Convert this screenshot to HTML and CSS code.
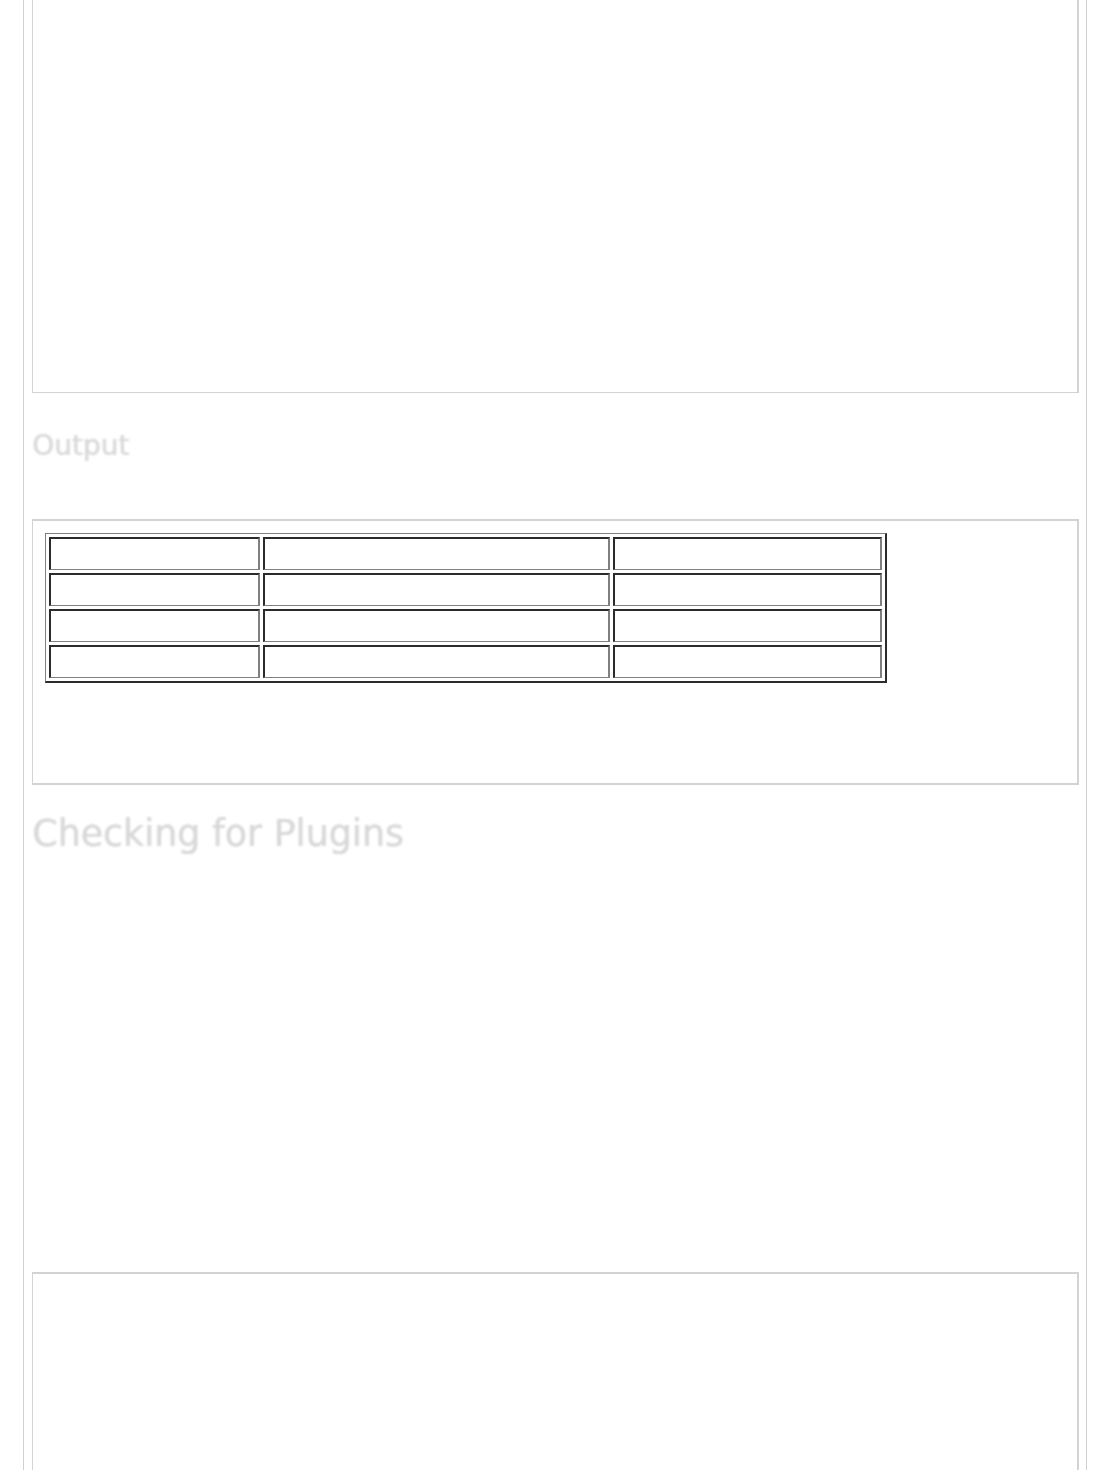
FILE: index.html
```html
<!DOCTYPE html>
<html lang="en">
<head>
<meta charset="utf-8">
<title>Checking for Plugins</title>
<link rel="stylesheet" href="styles.css">
</head>
<body>
<div class="page">
  <div class="box box-top"></div>
  <h2 class="heading heading-sub">Output</h2>
  <div class="box box-output">
    <table class="result">
      <tr><td class="c1">&nbsp;</td><td class="c2">&nbsp;</td><td class="c3">&nbsp;</td></tr>
      <tr><td class="c1">&nbsp;</td><td class="c2">&nbsp;</td><td class="c3">&nbsp;</td></tr>
      <tr><td class="c1">&nbsp;</td><td class="c2">&nbsp;</td><td class="c3">&nbsp;</td></tr>
      <tr><td class="c1">&nbsp;</td><td class="c2">&nbsp;</td><td class="c3">&nbsp;</td></tr>
    </table>
  </div>
  <h1 class="heading heading-main">Checking for Plugins</h1>
  <div class="box box-bottom"></div>
</div>
</body>
</html>
```
FILE: styles.css
```css
html, body {
  margin: 0;
  padding: 0;
  background: #ffffff;
}

body {
  font-family: "DejaVu Sans", Verdana, sans-serif;
  overflow: hidden;
  height: 1470px;
}

.page {
  margin-left: 23px;
  width: 1064px;
  min-height: 1470px;
  border-left: 1px solid #d0d0d0;
  border-right: 1px solid #d0d0d0;
  padding: 0 7px 0 8px;
  box-sizing: border-box;
  display: flex;
  flex-direction: column;
}

.box {
  border-style: solid;
  border-color: #d3d3d3;
  border-width: 2px 2px 2px 1px;
  box-sizing: border-box;
  background: #ffffff;
}

.box-top {
  border-top-width: 0;
  border-bottom-width: 1px;
  height: 393px;
}

.box-output {
  height: 266px;
  padding: 12px 0 0 12px;
  margin-top: 57px;
}

.box-bottom {
  margin-top: 417px;
  height: 260px;
  flex: none;
}

.heading {
  margin: 0;
  font-weight: normal;
  color: #d8d8d8;
  text-shadow: 0.5px 0 0 #d8d8d8;
  filter: blur(0.8px);
}

.heading-sub {
  font-size: 28px;
  line-height: 32px;
  margin-top: 37px;
}

.heading-main {
  font-size: 36.4px;
  line-height: 42px;
  margin-top: 28px;
}

.result {
  border-collapse: separate;
  border-spacing: 3px;
  border-style: solid;
  border-width: 1px 2px 2px 1px;
  border-color: #808080 #2b2b2b #2b2b2b #808080;
  width: 842px;
  box-sizing: border-box;
}

.result td {
  padding: 0;
  height: 33px;
  box-sizing: border-box;
  border-style: solid;
  border-width: 2px 2px 1px 2px;
  border-color: #2b2b2b #808080 #808080 #2b2b2b;
  font-size: 13px;
  color: #ffffff;
}

.c1 { width: 211px; }
.c2 { width: 347px; }
.c3 { width: 269px; }
```
